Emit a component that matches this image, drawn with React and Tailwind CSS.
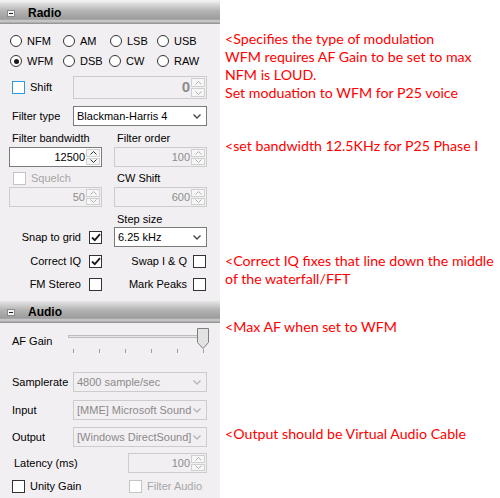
import React from 'react';

const ui = { fontFamily: '"Liberation Sans", Arial, sans-serif' };
const note = { fontFamily: 'Lato, "Open Sans", sans-serif' };

const Header = ({ title, className = '' }) => (
  <div
    className={`flex h-[22px] items-center bg-[linear-gradient(to_bottom,#e6e6e6,#b4b4b4_40%,#9c9c9c_78%,#d2d2d2_86%,#8c8c8c)] ${className}`}
  >
    <div className="ml-[7px] flex h-[7px] w-[8px] items-center justify-center border border-[#8a8a8a] bg-[#f4f4f4]">
      <div className="h-[1px] w-[4px] bg-[#202020]" />
    </div>
    <span className="ml-[13px] text-[12px] font-bold text-black">{title}</span>
  </div>
);

const Radio = ({ label, checked }) => (
  <div className="flex items-center">
    <div className="flex h-[12px] w-[12px] items-center justify-center rounded-full border border-[#333] bg-white">
      {checked && <div className="h-[5px] w-[5px] rounded-full bg-[#1a1a1a]" />}
    </div>
    <span className="ml-[5px] text-[11px] text-black">{label}</span>
  </div>
);

const Check = ({ checked, disabled, focus }) => (
  <div
    className={`flex h-[13px] w-[13px] shrink-0 items-center justify-center border bg-white ${
      focus ? 'border-[#2c9be0]' : disabled ? 'border-[#c4c4c4]' : 'border-[#333]'
    }`}
  >
    {checked && (
      <svg width="10" height="9" viewBox="0 0 10 9">
        <path d="M1 4.5 L3.8 7.2 L9 1.2" fill="none" stroke="#1a1a1a" strokeWidth="1.8" />
      </svg>
    )}
  </div>
);

const Chevron = ({ up, color }) => (
  <svg width="7" height="4" viewBox="0 0 7 4">
    <path d={up ? 'M0.5 3.5 L3.5 0.5 L6.5 3.5' : 'M0.5 0.5 L3.5 3.5 L6.5 0.5'} fill="none" stroke={color} strokeWidth="1" />
  </svg>
);

const Numeric = ({ value, disabled, className = '', big }) => (
  <div
    className={`flex h-[20px] items-stretch border ${
      disabled ? 'border-[#cccccc] bg-[#f2eff2]' : 'border-[#7a7a7a] bg-white'
    } ${className}`}
  >
    <div
      className={`flex flex-1 items-center justify-end pr-[1px] ${
        big ? 'text-[15px] font-bold' : 'text-[11px]'
      } ${disabled ? 'text-[#8c8c8c]' : 'text-black'}`}
    >
      {value}
    </div>
    <div className="flex w-[15px] flex-col gap-[1px] py-[1px] pr-[1px]">
      <div className="flex flex-1 items-center justify-center border border-[#d0d0d0] bg-[#f6f6f6]">
        <Chevron up color={disabled ? '#b0b0b0' : '#303030'} />
      </div>
      <div className="flex flex-1 items-center justify-center border border-[#d0d0d0] bg-[#f6f6f6]">
        <Chevron color={disabled ? '#b0b0b0' : '#303030'} />
      </div>
    </div>
  </div>
);

const Combo = ({ value, disabled, className = '' }) => (
  <div
    className={`flex h-[20px] items-center border pl-[3px] pr-[5px] ${
      disabled ? 'border-[#cccccc] bg-[#f2eff2]' : 'border-[#7a7a7a] bg-white'
    } ${className}`}
  >
    <span className={`flex-1 whitespace-nowrap text-[11px] ${disabled ? 'text-[#8a8a8a]' : 'text-black'}`}>{value}</span>
    <svg width="8" height="5" viewBox="0 0 8 5">
      <path d="M0.5 0.5 L4 4 L7.5 0.5" fill="none" stroke={disabled ? '#b4b4b4' : '#444'} strokeWidth="1.3" />
    </svg>
  </div>
);

const Slider = () => {
  const ticks = [5, 31, 57, 83, 109, 135];
  return (
    <div className="relative ml-[5px] h-[28px] w-[142px]">
      <div className="absolute left-0 top-[7px] h-[3px] w-[136px] border border-[#bdbdbd] bg-[#e6e6e6]" />
      <svg className="absolute left-[129px] top-0" width="12" height="21" viewBox="0 0 12 21">
        <path d="M0.5 0.5 H11.5 V14.5 L6 20.5 L0.5 14.5 Z" fill="#e2e2e2" stroke="#7f7f7f" />
      </svg>
      {ticks.map((x) => (
        <div key={x} className="absolute top-[21px] h-[4px] w-[1px] bg-[#a0a0a0]" style={{ left: x }} />
      ))}
    </div>
  );
};

const Note = ({ children, className = '' }) => (
  <div className={`whitespace-nowrap text-[14.2px] leading-[18px] text-[#ff0000] ${className}`} style={note}>
    {children}
  </div>
);

export default function App() {
  return (
    <div className="flex h-[498px] w-[500px] overflow-hidden bg-white" style={ui}>
      <div className="flex w-[220px] shrink-0 flex-col bg-[#f2eff2] text-[11px] text-black">
        <Header title="Radio" className="mt-[2px]" />

        <div className="mt-[7px] grid h-[20px] grid-cols-[53px_47px_47px_47px] items-center pl-[10px]">
          <Radio label="NFM" />
          <Radio label="AM" />
          <Radio label="LSB" />
          <Radio label="USB" />
        </div>
        <div className="grid h-[20px] grid-cols-[53px_46px_48px_47px] items-center pl-[10px]">
          <Radio label="WFM" checked />
          <Radio label="DSB" />
          <Radio label="CW" />
          <Radio label="RAW" />
        </div>

        <div className="mt-[5px] flex h-[23px] items-center pl-[12px]">
          <Check focus />
          <span className="ml-[5px] w-[43px]">Shift</span>
          <Numeric value="0" disabled big className="h-[23px] w-[134px]" />
        </div>

        <div className="mt-[7px] flex h-[20px] items-center pl-[12px]">
          <span className="w-[61px]">Filter type</span>
          <Combo value="Blackman-Harris 4" className="w-[134px]" />
        </div>

        <div className="mt-[4px] grid h-[16px] grid-cols-[105px_93px] items-center pl-[9px]">
          <span className="pl-[3px]">Filter bandwidth</span>
          <span className="pl-[3px]">Filter order</span>
        </div>
        <div className="mt-[1px] grid h-[20px] grid-cols-[105px_93px] items-center pl-[9px]">
          <Numeric value="12500" className="w-[93px]" />
          <Numeric value="100" disabled className="w-[93px]" />
        </div>

        <div className="mt-[3px] grid h-[16px] grid-cols-[105px_93px] items-center pl-[9px]">
          <div className="flex items-center pl-[4px]">
            <Check disabled />
            <span className="ml-[5px] text-[#a6a6a6]">Squelch</span>
          </div>
          <span className="pl-[3px]">CW Shift</span>
        </div>
        <div className="mt-[1px] grid h-[20px] grid-cols-[105px_93px] items-center pl-[9px]">
          <Numeric value="50" disabled className="w-[93px]" />
          <Numeric value="600" disabled className="w-[93px]" />
        </div>

        <div className="mt-[4px] grid h-[16px] grid-cols-[105px_93px] items-center pl-[9px]">
          <span />
          <span className="pl-[3px]">Step size</span>
        </div>
        <div className="grid h-[20px] grid-cols-[105px_93px] items-center pl-[9px]">
          <div className="flex items-center justify-end gap-[8px] pr-[12px]">
            <span>Snap to grid</span>
            <Check checked />
          </div>
          <Combo value="6.25 kHz" className="w-[93px]" />
        </div>

        <div className="mt-[4px] grid h-[20px] grid-cols-[105px_93px] items-center pl-[9px]">
          <div className="flex items-center justify-end gap-[8px] pr-[12px]">
            <span>Correct IQ</span>
            <Check checked />
          </div>
          <div className="flex items-center justify-end gap-[6px] pr-[1px]">
            <span>Swap I &amp; Q</span>
            <Check />
          </div>
        </div>
        <div className="mt-[3px] grid h-[20px] grid-cols-[105px_93px] items-center pl-[9px]">
          <div className="flex items-center justify-end gap-[8px] pr-[12px]">
            <span>FM Stereo</span>
            <Check />
          </div>
          <div className="flex items-center justify-end gap-[6px] pr-[1px]">
            <span>Mark Peaks</span>
            <Check />
          </div>
        </div>

        <Header title="Audio" className="mt-[7px] h-[21px]" />

        <div className="mt-[5px] flex h-[28px] items-start pl-[12px]">
          <span className="mt-[6px] w-[51px] leading-[14px]">AF Gain</span>
          <Slider />
        </div>

        <div className="mt-[16px] flex h-[20px] items-center pl-[12px]">
          <span className="w-[61px]">Samplerate</span>
          <Combo value="4800 sample/sec" disabled className="w-[134px]" />
        </div>
        <div className="mt-[8px] flex h-[20px] items-center pl-[12px]">
          <span className="w-[61px]">Input</span>
          <Combo value="[MME] Microsoft Sound" disabled className="w-[134px]" />
        </div>
        <div className="mt-[7px] flex h-[20px] items-center pl-[12px]">
          <span className="w-[61px]">Output</span>
          <Combo value="[Windows DirectSound]" disabled className="w-[134px]" />
        </div>
        <div className="mt-[6px] flex h-[20px] items-center justify-between pl-[14px] pr-[13px]">
          <span>Latency (ms)</span>
          <Numeric value="100" disabled className="w-[79px]" />
        </div>
        <div className="mt-[3px] flex h-[20px] items-center pl-[12px]">
          <Check />
          <span className="ml-[5px] w-[99px]">Unity Gain</span>
          <Check disabled />
          <span className="ml-[5px] text-[#a6a6a6]">Filter Audio</span>
        </div>
      </div>

      <div className="flex flex-1 flex-col pl-[5px]">
        <Note className="mt-[30px]">
          <div>&lt;Specifies the type of modulation</div>
          <div>WFM requires AF Gain to be set to max</div>
          <div>NFM is LOUD.</div>
          <div>Set moduation to WFM for P25 voice</div>
        </Note>
        <Note className="mt-[35px]">&lt;set bandwidth 12.5KHz for P25 Phase I</Note>
        <Note className="mt-[97px]">
          <div>&lt;Correct IQ fixes that line down the middle</div>
          <div>of the waterfall/FFT</div>
        </Note>
        <Note className="mt-[30px]">&lt;Max AF when set to WFM</Note>
        <Note className="mt-[89px]">&lt;Output should be Virtual Audio Cable</Note>
      </div>
    </div>
  );
}
